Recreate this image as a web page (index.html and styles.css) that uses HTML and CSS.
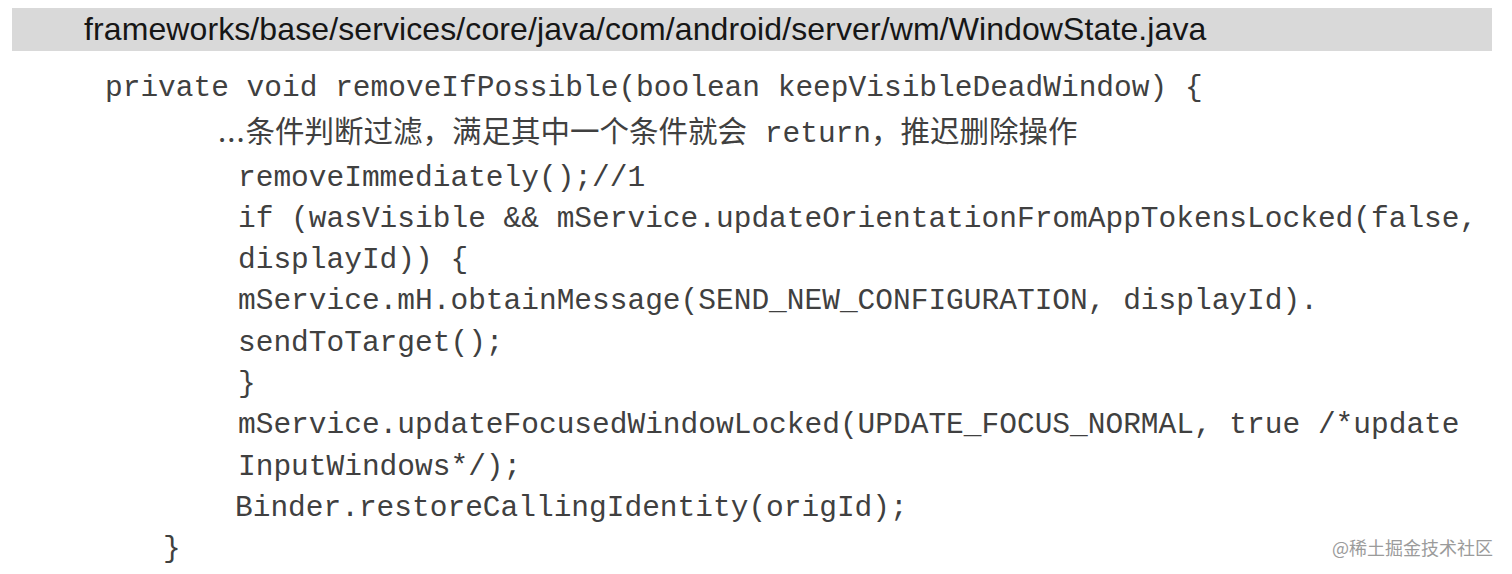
FILE: index.html
```html
<!DOCTYPE html>
<html lang="zh-CN">
<head>
    <meta charset="UTF-8">
    <title>WindowState.java</title>
    <link rel="stylesheet" href="styles.css">
</head>
<body>
    <div class="path-bar">frameworks/base/services/core/java/com/android/server/wm/WindowState.java</div>

    <div class="code">
        <div class="line l0">private void removeIfPossible(boolean keepVisibleDeadWindow) {</div>
        <div class="line l1 note"><span class="dots">...</span>条件判断过滤，满足其中一个条件就会 return，推迟删除操作</div>
        <div class="line l2">removeImmediately();//1</div>
        <div class="line l2">if (wasVisible &amp;&amp; mService.updateOrientationFromAppTokensLocked(false,</div>
        <div class="line l2">displayId)) {</div>
        <div class="line l2">mService.mH.obtainMessage(SEND_NEW_CONFIGURATION, displayId).</div>
        <div class="line l2">sendToTarget();</div>
        <div class="line l2">}</div>
        <div class="line l2">mService.updateFocusedWindowLocked(UPDATE_FOCUS_NORMAL, true /*update</div>
        <div class="line l2">InputWindows*/);</div>
        <div class="line l2b">Binder.restoreCallingIdentity(origId);</div>
        <div class="line lc">}</div>
    </div>

    <div class="watermark">@稀土掘金技术社区</div>
</body>
</html>
```

FILE: styles.css
```css
body {
    margin: 0;
    background-color: #fff;
    position: relative;
    height: 574px;
    overflow: hidden;
}

.path-bar {
    margin: 8px 20px 0 12px;
    height: 43px;
    line-height: 43px;
    padding-left: 72px;
    background-color: #d9d9d9;
    font-family: "Liberation Sans", Arial, sans-serif;
    font-size: 32px;
    letter-spacing: 0.1px;
    color: #161616;
    white-space: nowrap;
}

.code {
    margin-top: 17px;
    font-family: "Liberation Mono", "Noto Sans CJK SC", monospace;
    font-size: 29.5px;
    line-height: 41.3px;
    color: #404040;
}

.line {
    white-space: pre;
}

.line.l0 { padding-left: 105px; }
.line.l1 { padding-left: 218px; }
.line.l2 { padding-left: 238px; }
.line.l2b { padding-left: 235px; }
.line.lc { padding-left: 163px; }

.note {
    margin-bottom: 2px;
}

.note .dots {
    font-family: "Noto Sans CJK SC", sans-serif;
    letter-spacing: 1px;
}

.watermark {
    position: absolute;
    right: 19px;
    bottom: 14px;
    font-family: "Noto Sans CJK SC", sans-serif;
    font-size: 18px;
    color: #9b9b9b;
}
```
